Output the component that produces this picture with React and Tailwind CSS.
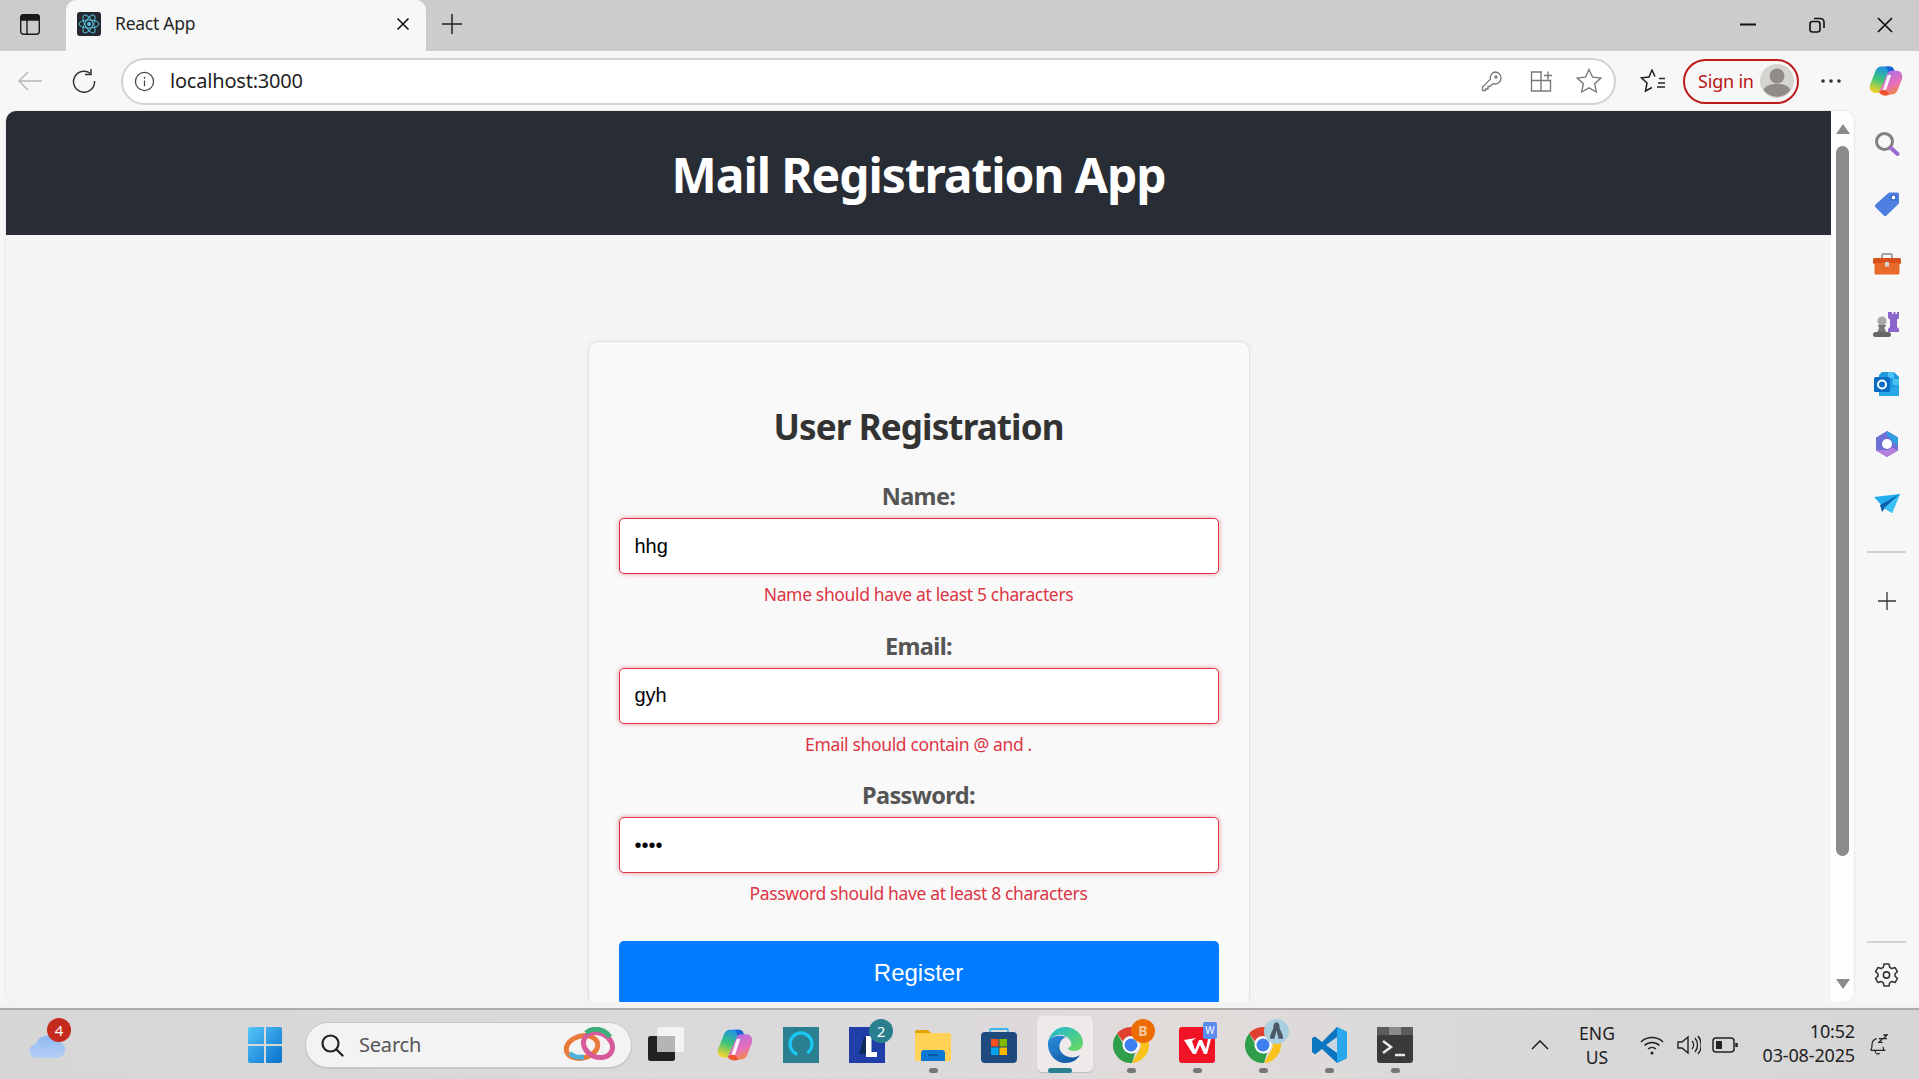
import React from "react";

const UI = "font-['Noto_Sans','Open_Sans',sans-serif]";

const Atom = () => (
  <svg viewBox="0 0 24 24" className="w-6 h-6">
    <rect width="24" height="24" rx="3" fill="#23272f" />
    <g fill="none" stroke="#58c4dc" strokeWidth="1">
      <ellipse cx="12" cy="12" rx="10" ry="4" />
      <ellipse cx="12" cy="12" rx="10" ry="4" transform="rotate(60 12 12)" />
      <ellipse cx="12" cy="12" rx="10" ry="4" transform="rotate(120 12 12)" />
    </g>
    <circle cx="12" cy="12" r="2" fill="#58c4dc" />
  </svg>
);

const CopilotLogo = ({ s = 40, id = "a" }) => (
  <svg viewBox="0 0 40 40" width={s} height={s}>
    <defs>
      <linearGradient id={`cpa${id}`} x1="0.6" y1="0" x2="0.3" y2="1">
        <stop offset="0" stopColor="#1f8fe8" />
        <stop offset="0.5" stopColor="#3cc47a" />
        <stop offset="1" stopColor="#f7d42c" />
      </linearGradient>
      <linearGradient id={`cpb${id}`} x1="0.3" y1="0" x2="0.7" y2="1">
        <stop offset="0" stopColor="#b06fe8" />
        <stop offset="0.6" stopColor="#e870b8" />
        <stop offset="1" stopColor="#f5883c" />
      </linearGradient>
    </defs>
    <path d="M14 3h10c3 0 4.500 1.500 5 3.500l-2 6.500-8 16-7 5H8C3 34 0 30 1 25L7 10c1-4 4-7 7-7z" fill={`url(#cpa${id})`} />
    <path d="M19 3h5c3 0 5 1.500 6 5l1 3h-8l-1-4c-.5-2-1.500-3.500-3-4z" fill="#1a62d8" />
    <path d="M26 8h7c4 0 7 4 6 9l-5 13c-1.500 4-4 6-7 6H16c-2 0-3.500-1-4-3l9-20c1-3 3-5 5-5z" fill={`url(#cpb${id})`} />
    <path d="M22 13h4l-6 18h-4z" fill="#fff" opacity=".9" />
    <path d="M12 33c3 5 9 5 12 3l-4-5h-5z" fill="#f0522c" />
  </svg>
);

const EdgeLogo = () => (
  <svg viewBox="0 0 36 36" className="w-9 h-9">
    <defs>
      <linearGradient id="ed1" x1="0" y1="0" x2="1" y2="1">
        <stop offset="0" stopColor="#1bb6d8" />
        <stop offset="1" stopColor="#6fdc5a" />
      </linearGradient>
      <linearGradient id="ed2" x1="0" y1="0" x2="1" y2="1">
        <stop offset="0" stopColor="#2c8fdc" />
        <stop offset="1" stopColor="#0f4f9c" />
      </linearGradient>
    </defs>
    <path d="M1 15 C3 6 10 0 18 0 c10 0 18 7 18 16 c0 5 -4 8 -9 8 c-3 0 -6 -1 -6 -3 c3 -1 4 -3 3 -6 C22 10 16 7 11 8 C6 9 2 12 1 15z" fill="url(#ed1)" />
    <path d="M1 15 C0 26 8 36 18 36 c7 0 12 -3 15 -8 c-4 3 -10 3 -14 1 c-5 -2 -8 -8 -6 -13 c1 -3 3 -5 6 -6 c-7 -3 -17 0 -18 5z" fill="url(#ed2)" />
  </svg>
);

const ChromeLogo = () => (
  <svg viewBox="0 0 36 36" className="w-9 h-9">
    <path d="M18 0a18 18 0 0 1 15.6 9H18a9 9 0 0 0-8.2 5.3L4.1 6.5A18 18 0 0 1 18 0z" fill="#e2402f" />
    <path d="M33.6 9A18 18 0 0 1 19 36l7.6-13.5A9 9 0 0 0 26.2 13z" fill="#f9c31c" />
    <path d="M4.1 6.5l7.9 13.6A7.5 7.5 0 0 0 22 26l-3 10A18 18 0 0 1 4.100 6.500z" fill="#2f9e4a" />
    <circle cx="18" cy="18" r="8.500" fill="#fff" />
    <circle cx="18" cy="18" r="6.500" fill="#3d7ff0" />
  </svg>
);

const Cell = ({ children, dot, bar, active }) => (
  <div className="relative w-[66px] h-[69px] flex items-center justify-center">
    {active && <div className="absolute left-[5px] top-[6px] w-[56px] h-[56px] rounded-[5px] bg-[#efeaea] shadow-[0_1px_1px_rgba(0,0,0,.15)]" />}
    <div className="relative flex">{children}</div>
    {dot && <div className="absolute left-[29px] top-[58px] w-[9px] h-[5px] rounded-full bg-[#777777]" />}
    {bar && <div className="absolute left-[16px] top-[58px] w-[24px] h-[5px] rounded-full bg-[#2a7f8f]" />}
  </div>
);

const Field = ({ label, value, error, type = "text" }) => (
  <div className="mb-[25.5px]">
    <label className="block h-[28px] mb-[8px] text-center text-[23.500px] leading-[28px] font-bold text-[#555555] tracking-[-0.6px]">{label}</label>
    <input
      readOnly
      type={type}
      value={value}
      className="block w-full h-[56px] px-[15px] bg-white border border-[#dc3545] rounded-[5px] shadow-[0_0_5px_rgba(220,53,69,0.5)] text-[20px] text-black font-['Liberation_Sans',sans-serif] outline-none"
    />
    <p className="mt-[8px] h-[24px] text-center text-[17.500px] leading-[24px] text-[#dc3545] tracking-[-0.35px]">{error}</p>
  </div>
);

const SideCell = ({ children }) => <div className="h-[60px] flex items-center justify-center">{children}</div>;

export default function App() {
  return (
    <div className={`w-[1919px] h-[1079px] flex flex-col overflow-hidden bg-[#f7f7f7] ${UI}`}>
      {/* tab strip */}
      <div className="h-[51px] flex items-center bg-[#cccccc] shrink-0">
        <div className="w-[66px] mb-[3px] pr-[6px] flex justify-center">
          <svg viewBox="0 0 20 21" className="w-5 h-[21px]" fill="none" stroke="#1a1a1a" strokeWidth="1.400">
            <rect x=".7" y=".7" width="18.600" height="19.600" rx="3" />
            <path d="M.7 6 V3.700 a3 3 0 0 1 3 -3 h12.600 a3 3 0 0 1 3 3 V6z" fill="#1a1a1a" />
            <path d="M7 6v14" />
          </svg>
        </div>
        <div className="w-[360px] h-[51px] pb-[3px] flex items-center bg-[#f7f7f7] rounded-t-[10px] pl-[11px]">
          <Atom />
          <span className="ml-[14px] mb-[1px] text-[17.500px] text-[#262626] tracking-[-0.25px]">React App</span>
          <svg viewBox="0 0 14 14" className="w-[14px] h-[14px] ml-auto mr-[16px]" stroke="#111" strokeWidth="1.600">
            <path d="M1.500 1.500l11 11M12.500 1.500l-11 11" />
          </svg>
        </div>
        <svg viewBox="0 0 22 22" className="w-[22px] h-[22px] ml-[15px] mb-[3px]" stroke="#222" strokeWidth="1.500">
          <path d="M11 1v20M1 11h20" />
        </svg>
        <div className="ml-auto mb-[2px] flex items-center">
          <div className="w-[69px] flex justify-center">
            <svg viewBox="0 0 16 4" className="w-4 h-1"><path d="M0 1.500h16" stroke="#111" strokeWidth="2" /></svg>
          </div>
          <div className="w-[69px] flex justify-center">
            <svg viewBox="0 0 16 16" className="w-4 h-4" fill="none" stroke="#111" strokeWidth="1.600">
              <rect x="1" y="4.500" width="10" height="10.500" rx="2.500" />
              <path d="M5 1.500h6.500a3.500 3.500 0 0 1 3.500 3.500V11" />
            </svg>
          </div>
          <div className="w-[68px] flex justify-center">
            <svg viewBox="0 0 16 16" className="w-4 h-4" stroke="#111" strokeWidth="1.700">
              <path d="M1 1l14 14M15 1L1 15" />
            </svg>
          </div>
        </div>
      </div>

      {/* toolbar */}
      <div className="h-[60px] flex items-center bg-[#f7f7f7] shrink-0">
        <div className="w-[60px] flex justify-center">
          <svg viewBox="0 0 24 20" className="w-6 h-5" fill="none" stroke="#b5b5b5" strokeWidth="1.400">
            <path d="M24 10H1M10 1l-9 9 9 9" />
          </svg>
        </div>
        <div className="w-[48px] flex justify-center">
          <svg viewBox="0 0 24 24" className="w-6 h-6" fill="none" stroke="#333" strokeWidth="1.500">
            <path d="M18.500 4.500A10.500 10.500 0 1 0 22.500 12" />
            <path d="M19 0v5.500h-6" />
          </svg>
        </div>
        <div className="ml-[13px] w-[1495px] h-[47px] flex items-center bg-white border-2 border-[#d2d2d2] rounded-full">
          <svg viewBox="0 0 22 22" className="w-[21px] h-[21px] ml-[11px]" fill="none" stroke="#444" strokeWidth="1.300">
            <circle cx="11" cy="11" r="9.500" />
            <path d="M11 10v6M11 6v2" />
          </svg>
          <span className="ml-[15px] text-[20px] text-[#1f1f1f] tracking-[-0.2px]">localhost:3000</span>
          <div className="ml-auto flex items-center">
            <svg viewBox="0 0 22 22" className="w-[22px] h-[22px]" fill="none" stroke="#7a7a7a" strokeWidth="1.300">
              <path d="M14 2a6 6 0 0 1 0 12c-.7 0-1.400-.1-2-.4L9 16.500H7V19H4.500v1.500H1.500V17l7.900-7.900A6 6 0 0 1 14 2z" />
              <circle cx="15" cy="7" r="1" fill="#7a7a7a" />
            </svg>
            <svg viewBox="0 0 24 24" className="w-[24px] h-[24px] ml-[26px]" fill="none" stroke="#7a7a7a" strokeWidth="1.400">
              <path d="M13 3H2.500v19h19V11.500H2.500M12 3v19M15 6.500h8M19 2.500v8" />
            </svg>
            <svg viewBox="0 0 26 26" className="w-[26px] h-[26px] ml-[23px] mr-[12px]" fill="none" stroke="#7a7a7a" strokeWidth="1.400">
              <path d="M13 1.500l3.500 7.600 8.300 1-6.100 5.700 1.600 8.200-7.300-4.100-7.300 4.100 1.600-8.200L1.200 10.100l8.300-1z" />
            </svg>
          </div>
        </div>
        <div className="w-[67px] pl-[7px] flex justify-center">
          <svg viewBox="0 0 26 24" className="w-[26px] h-[24px]" fill="none" stroke="#222" strokeWidth="1.500">
            <path d="M19 9.500h6M18 14h7M17 18h8M15 7.500L12 1 9 8l-7.500 .8 5.500 5.200-1.500 8 6.500-3.500" />
          </svg>
        </div>
        <div className="w-[116px] h-[45px] flex items-center border-2 border-[#bd1a1a] rounded-full">
          <span className="ml-[13px] text-[18px] text-[#b81414] tracking-[-0.2px]">Sign in</span>
          <svg viewBox="0 0 34 34" className="ml-auto mr-[3px] w-[34px] h-[34px]">
            <circle cx="17" cy="17" r="17" fill="#d6d4d0" />
            <circle cx="17" cy="12" r="7.500" fill="#8f8b86" />
            <path d="M3.500 26 C6 21 11 20 17 20 s11 1 13.500 6 A17 17 0 0 1 3.500 26z" fill="#8f8b86" />
          </svg>
        </div>
        <div className="w-[64px] flex justify-center">
          <svg viewBox="0 0 20 4" className="w-5 h-1" fill="#333">
            <circle cx="2" cy="2" r="1.800" /><circle cx="10" cy="2" r="1.800" /><circle cx="18" cy="2" r="1.800" />
          </svg>
        </div>
        <div className="w-[46px] flex justify-center">
          <CopilotLogo s={34} id="t" />
        </div>
      </div>

      {/* content row */}
      <div className="h-[891px] flex shrink-0">
        <div className="w-[6px]" />
        <div className="w-[1848px] h-full flex rounded-[10px] overflow-hidden shadow-[0_0_2px_rgba(0,0,0,.2)]">
          <div className="w-[1825px] h-full bg-[#f5f5f5] overflow-hidden">
            <header className="h-[124px] bg-[#282c34] flex items-center justify-center">
              <h1 className="mt-[3px] text-[48px] font-bold text-white tracking-[-1.1px]">Mail Registration App</h1>
            </header>
            <div className="pt-[106px]">
              <div className="w-[662px] mx-auto pt-[63px] px-[30px] bg-[#f9f9f9] border border-[#e0e0e0] rounded-[10px] shadow-[0_0_10px_rgba(0,0,0,0.05)]">
                <h2 className="h-[44px] mb-[33px] text-center text-[35px] leading-[44px] font-bold text-[#333333] tracking-[-0.88px]">User Registration</h2>
                <Field label="Name:" value="hhg" error="Name should have at least 5 characters" />
                <Field label="Email:" value="gyh" error="Email should contain @ and ." />
                <Field label="Password:" value="hhhh" type="password" error="Password should have at least 8 characters" />
                <button className="block mt-[36px] w-full h-[64px] bg-[#007bff] rounded-[5px] text-[24px] text-white font-['Liberation_Sans',sans-serif]">Register</button>
              </div>
            </div>
          </div>
          <div className="w-[23px] h-full bg-[#fdfdfd] flex flex-col items-center pt-[13px] pb-[13px]">
            <div className="w-0 h-0 border-x-[7px] border-x-transparent border-b-[10px] border-b-[#8b8b8b]" />
            <div className="mt-[12px] w-[13px] h-[710px] rounded-full bg-[#8b8b8b]" />
            <div className="mt-auto w-0 h-0 border-x-[7px] border-x-transparent border-t-[10px] border-t-[#8b8b8b]" />
          </div>
        </div>
        <div className="w-[65px] h-full flex flex-col pt-[3px]">
          <SideCell>
            <svg viewBox="0 0 26 26" className="w-[26px] h-[26px]">
              <circle cx="10.500" cy="10.500" r="8" fill="none" stroke="#808080" strokeWidth="3" />
              <path d="M17 17l6.500 6" stroke="#9a6bd0" strokeWidth="4" strokeLinecap="round" />
            </svg>
          </SideCell>
          <SideCell>
            <svg viewBox="0 0 26 26" className="w-[26px] h-[26px]">
              <path d="M15 1.500h8a2 2 0 0 1 2 2v8a2 2 0 0 1-.6 1.400L12.500 24.500a2 2 0 0 1-2.800 0L1.500 16.300a2 2 0 0 1 0-2.800z" fill="#4d7fe0" />
              <circle cx="19.500" cy="6.500" r="2.500" fill="#fff" stroke="#2f5fc0" strokeWidth="1.200" />
            </svg>
          </SideCell>
          <SideCell>
            <svg viewBox="0 0 28 22" className="w-[28px] h-[22px]">
              <path d="M9 5V2.500A1.500 1.500 0 0 1 10.500 1h7A1.500 1.500 0 0 1 19 2.500V5" fill="none" stroke="#8a8a8a" strokeWidth="1.600" />
              <rect x="0" y="5" width="28" height="6" rx="1.500" fill="#d8501c" />
              <rect x="1.500" y="10" width="25" height="11.500" rx="1.500" fill="#e86a2a" />
              <rect x="12" y="9" width="4" height="4.500" rx=".5" fill="#d5d5d5" />
            </svg>
          </SideCell>
          <SideCell>
            <svg viewBox="0 0 28 28" className="w-[28px] h-[28px]">
              <path d="M17 2h2v2h1.500V2h2v2H24V2h2v6l-2 1.500V17l2 2v3H15v-3l2-2V9.500L15 8V2z" fill="#8b64cc" />
              <circle cx="9" cy="11" r="4.500" fill="#a8a8a8" />
              <path d="M5 15h8v1.500h-1.500c0 3 1 5 3 6.500H3c2-1.500 3-3.500 3-6.500H5z" fill="#777" />
              <rect x="0" y="22" width="18" height="5" rx="2.500" fill="#666" />
            </svg>
          </SideCell>
          <SideCell>
            <svg viewBox="0 0 26 26" className="w-[26px] h-[26px]">
              <path d="M8 1h12l5 5v19H5V4z" fill="#1f9be0" />
              <path d="M14 1h6v7h5v6h-6V7h-5z" fill="#4cc2f0" />
              <path d="M5 14l10 6 10-7v11a1 1 0 0 1-1 1H6a1 1 0 0 1-1-1z" fill="#28a8ea" />
              <rect x="0" y="6" width="16" height="15" rx="1.500" fill="#0a6cc4" />
              <circle cx="8" cy="13.500" r="4" fill="none" stroke="#fff" strokeWidth="2" />
            </svg>
          </SideCell>
          <SideCell>
            <svg viewBox="0 0 26 26" className="w-[26px] h-[26px]">
              <path d="M13 0l11 6.500v13L13 26 2 19.500v-13z" fill="#6f6fd8" />
              <path d="M13 0l11 6.500v8L17 10c0-3-2-5-4-5z" fill="#2f9ee0" />
              <path d="M2 19.500L13 26l11-6.500-7-3.500c-1 2-2 3-4 3z" fill="#b87fe0" />
              <circle cx="13" cy="13" r="5" fill="#fff" />
            </svg>
          </SideCell>
          <SideCell>
            <svg viewBox="0 0 26 20" className="w-[26px] h-[20px]">
              <path d="M0 3L26 0 18 19 10 14z" fill="#22aef0" />
              <path d="M26 0L6 11l2 7 3-4z" fill="#0f5fb0" />
              <path d="M26 0L10 14l8 5z" fill="#3cc0f5" />
            </svg>
          </SideCell>
          <div className="mt-[17px] mx-[13px] h-[2px] bg-[#d2d2d2]" />
          <div className="mt-[38px] flex justify-center">
            <svg viewBox="0 0 20 20" className="w-5 h-5" stroke="#333" strokeWidth="1.300"><path d="M10 1v18M1 10h18" /></svg>
          </div>
          <div className="mt-auto mx-[13px] h-[2px] bg-[#d2d2d2]" />
          <div className="mt-[19px] mb-[15px] flex justify-center">
            <svg viewBox="0 0 24 24" className="w-[25px] h-[25px]" fill="none" stroke="#333" strokeWidth="1.500">
              <path d="M9.600 2h4.800l.6 3 2.200 1.300 3-1 2.300 4-2.300 2v2.400l2.300 2-2.300 4-3-1L15 20l-.6 3H9.600L9 20l-2.200-1.300-3 1-2.300-4 2.300-2v-2.400l-2.300-2 2.300-4 3 1L9 5z" strokeLinejoin="round" />
              <circle cx="12" cy="12.500" r="3" />
            </svg>
          </div>
        </div>
      </div>

      {/* gap + taskbar */}
      <div className="h-[6px] bg-[#f3f3f3] shrink-0" />
      <div className="h-[71px] border-t-2 border-[#acacac] flex items-center bg-[linear-gradient(90deg,#d6d6d6,#dadada_30%,#dcd9dc_50%,#e2dbda_62%,#d9d9d9_75%,#d6d6d6)] shrink-0">
        <div className="relative ml-[28px] w-[40px] h-[69px]">
          <svg viewBox="0 0 36 26" className="absolute left-[1px] top-[23px] w-[36px] h-[26px]">
            <defs>
              <linearGradient id="cl" x1="0" y1="0" x2="0" y2="1">
                <stop offset="0" stopColor="#8fbaf0" />
                <stop offset="1" stopColor="#b5cff5" />
              </linearGradient>
            </defs>
            <circle cx="30" cy="4" r="4" fill="#f08a20" />
            <path d="M8 25a7 7 0 0 1-1-14 11 11 0 0 1 20-3 8.500 8.500 0 0 1 1 17z" fill="url(#cl)" />
          </svg>
          <div className="absolute left-[19px] top-[8px] w-[24px] h-[24px] rounded-full bg-[#c42b1c] text-white text-[15px] leading-[24px] text-center">4</div>
        </div>
        <div className="ml-[180px]">
          <svg viewBox="0 0 34 36" className="w-[34px] h-[36px]">
            <defs>
              <linearGradient id="wn" x1="0" y1="0" x2="1" y2="1">
                <stop offset="0" stopColor="#56c6f8" />
                <stop offset="1" stopColor="#0670cc" />
              </linearGradient>
            </defs>
            <path d="M2 0h14v17H0V2a2 2 0 0 1 2-2z M18 0h14a2 2 0 0 1 2 2v15H18z M0 19h16v17H2a2 2 0 0 1-2-2z M18 19h16v15a2 2 0 0 1-2 2H18z" fill="url(#wn)" />
          </svg>
        </div>
        <div className="ml-[23px] w-[327px] h-[46px] flex items-center bg-[#f3f3f3] rounded-full border border-[#c8c8c8] shadow-[0_1px_1px_rgba(0,0,0,.1)]">
          <svg viewBox="0 0 24 24" className="ml-[14px] w-[24px] h-[24px]" fill="none" stroke="#222" strokeWidth="2.200">
            <circle cx="10.500" cy="10.500" r="8" /><path d="M16.500 16.500l6 6" strokeLinecap="round" />
          </svg>
          <span className="ml-[15px] text-[20px] text-[#555555] tracking-[-0.2px]">Search</span>
          <svg viewBox="0 0 56 36" className="ml-auto mr-[13px] w-[56px] h-[36px]" fill="none" strokeWidth="5">
            <ellipse cx="20" cy="20" rx="16" ry="11" stroke="#e87a3c" transform="rotate(-15 20 20)" />
            <ellipse cx="36" cy="18" rx="15" ry="12" stroke="#d85a9a" transform="rotate(25 36 18)" />
            <path d="M24 6 a15 12 25 0 1 24 4" stroke="#3fae7a" />
            <path d="M8 26 a16 11 -15 0 0 14 4" stroke="#4fb0d8" />
          </svg>
        </div>
        <div className="ml-[1px] flex">
          <Cell>
            <svg viewBox="0 0 36 36" className="w-9 h-9">
              <rect x="0" y="9" width="27" height="25" rx="2.500" fill="#222" />
              <rect x="9" y="0" width="27" height="25" rx="2.500" fill="#f5f5f5" opacity=".9" />
              <rect x="9" y="9" width="18" height="16" fill="#b5b5b5" />
            </svg>
          </Cell>
          <div className="w-[3px]" />
          <Cell><CopilotLogo s={36} id="b" /></Cell>
          <Cell>
            <svg viewBox="0 0 36 36" className="w-9 h-9">
              <rect width="36" height="36" fill="#2a8090" />
              <circle cx="18" cy="17" r="11" fill="none" stroke="#19c8f5" strokeWidth="3.200" strokeDasharray="58 11" transform="rotate(110 18 17)" />
            </svg>
          </Cell>
          <Cell>
            <svg viewBox="0 0 36 36" className="w-9 h-9">
              <rect width="36" height="36" fill="#1f3ea8" />
              <path d="M18 10h-3l-5 17h7z" fill="#0d2a58" />
              <path d="M17 9h5.500v16H28v5H17z" fill="#fff" />
            </svg>
            <div className="absolute left-[20px] top-[-8px] w-[24px] h-[24px] rounded-full bg-[#2a7f8f] text-white text-[15px] leading-[24px] text-center">2</div>
          </Cell>
          <Cell dot>
            <svg viewBox="0 0 36 32" className="w-9 h-8">
              <path d="M0 3a2 2 0 0 1 2-2h11l3 3h-16z" fill="#e0a400" />
              <rect x="0" y="4" width="36" height="28" rx="1.500" fill="#ffd257" />
              <path d="M6 32v-8a3 3 0 0 1 3-3h18a3 3 0 0 1 3 3v8z" fill="#0a78d4" />
              <path d="M13 26h10" stroke="#0a4f9a" strokeWidth="1.600" />
            </svg>
          </Cell>
          <Cell>
            <svg viewBox="0 0 36 36" className="w-9 h-9">
              <path d="M9 8V3a1 1 0 0 1 1-1h16a1 1 0 0 1 1 1v5" fill="none" stroke="#3fb6e8" strokeWidth="1.800" />
              <rect x="0" y="5" width="36" height="31" rx="4" fill="#1f4a7e" />
              <rect x="10" y="12" width="7.500" height="7.500" fill="#f25022" />
              <rect x="18.500" y="12" width="7.500" height="7.500" fill="#7fba00" />
              <rect x="10" y="20.500" width="7.500" height="7.500" fill="#00a4ef" />
              <rect x="18.500" y="20.500" width="7.500" height="7.500" fill="#ffb900" />
            </svg>
          </Cell>
          <Cell active bar><EdgeLogo /></Cell>
          <Cell dot>
            <ChromeLogo />
            <div className="absolute left-[18px] top-[-8px] w-[24px] h-[24px] rounded-full bg-[#ec6c00] text-[#f5c9a0] text-[14px] font-bold leading-[24px] text-center">B</div>
          </Cell>
          <Cell dot>
            <svg viewBox="0 0 36 36" className="w-9 h-9">
              <rect width="36" height="36" rx="3" fill="#f01325" />
              <path d="M5 13l12-2-4 3 3 9 4-10h3l4 9 2-10h3l-4 15h-3l-4-9-4 9h-3z" fill="#fff" />
            </svg>
            <div className="absolute left-[24px] top-[-5px] w-[14px] h-[17px] rounded-[2px] bg-[#5b8df0] text-white text-[10px] leading-[17px] text-center">W</div>
          </Cell>
          <Cell dot>
            <ChromeLogo />
            <svg viewBox="0 0 24 24" className="absolute left-[19px] top-[-8px] w-[25px] h-[25px]">
              <circle cx="12" cy="12" r="12" fill="#a9cfe0" />
              <path d="M12 3c3 0 3 4 3 6 2 4 4 8 3 10h-4l-2-8-2 8H6c-1-2 1-6 3-10 0-2 0-6 3-6z" fill="#4a5a66" />
            </svg>
          </Cell>
          <Cell dot>
            <svg viewBox="0 0 36 36" className="w-9 h-9">
              <path d="M26 0l10 5v26l-10 5-15-14-7 5.500L1 25v-14l3-1.500 7 5.500z" fill="#0b75c0" />
              <path d="M26 0l10 5v26l-10 5V0z" fill="#29a8ef" />
              <path d="M26 10L15 18l11 8z" fill="#e0e0e0" opacity=".9" />
            </svg>
          </Cell>
          <Cell dot>
            <svg viewBox="0 0 36 36" className="w-9 h-9">
              <rect width="36" height="36" rx="3" fill="#3a3a3a" />
              <rect x="0" y="0" width="36" height="8" fill="#5c5c5c" />
              <rect x="12" y="0" width="12" height="8" fill="#8a8a8a" />
              <path d="M6 14l8 6-8 6" fill="none" stroke="#e8e8e8" strokeWidth="2.500" />
              <path d="M18 28h10" stroke="#e8e8e8" strokeWidth="2.500" />
            </svg>
          </Cell>
        </div>
        <div className="ml-auto flex items-center pr-[31px]">
          <svg viewBox="0 0 18 10" className="w-[18px] h-[10px]" fill="none" stroke="#222" strokeWidth="1.600">
            <path d="M1 9l8-8 8 8" />
          </svg>
          <div className="ml-[22px] w-[52px] text-center text-[17.500px] leading-[24px] text-[#222222]">
            <div>ENG</div>
            <div>US</div>
          </div>
          <svg viewBox="0 0 24 20" className="ml-[17px] w-[24px] h-[20px]" fill="none" stroke="#222" strokeWidth="1.500">
            <path d="M1 7a16 16 0 0 1 22 0M4.500 10.500a11 11 0 0 1 15 0M8 14a6 6 0 0 1 8 0" />
            <circle cx="12" cy="18" r="1.500" fill="#222" stroke="none" />
          </svg>
          <svg viewBox="0 0 24 22" className="ml-[13px] w-[24px] h-[22px]" fill="none" stroke="#222" strokeWidth="1.400">
            <path d="M1 8h4l6-5v16l-6-5H1zM15 7a6 6 0 0 1 0 8M18 4a11 11 0 0 1 0 14M21 2a14 14 0 0 1 0 18" />
          </svg>
          <svg viewBox="0 0 26 16" className="ml-[11px] w-[26px] h-[16px]" fill="none" stroke="#222" strokeWidth="1.500">
            <rect x="1" y="1" width="21" height="14" rx="3" />
            <rect x="4" y="4" width="6" height="8" fill="#222" stroke="none" />
            <path d="M24.500 6v4" strokeWidth="2.500" />
          </svg>
          <div className="ml-[24px] mb-[4px] w-[93px] text-right text-[18px] leading-[24px] text-[#222222] tracking-[-0.15px] whitespace-nowrap">
            <div>10:52</div>
            <div>03-08-2025</div>
          </div>
          <svg viewBox="0 0 22 26" className="ml-[13px] w-[20px] h-[26px]" fill="none" stroke="#222" strokeWidth="1.300">
            <path d="M3 19c1.500-2 1.500-4 1.500-7 0-3 2-5 5-6M3 19h15c-1-1-1.500-2-1.500-4M8 19a3 3 0 0 0 5 3" />
            <path d="M12 6h4l-4 4h4M17 2h4l-4 4h4" strokeWidth="1.400" />
          </svg>
        </div>
      </div>
    </div>
  );
}
